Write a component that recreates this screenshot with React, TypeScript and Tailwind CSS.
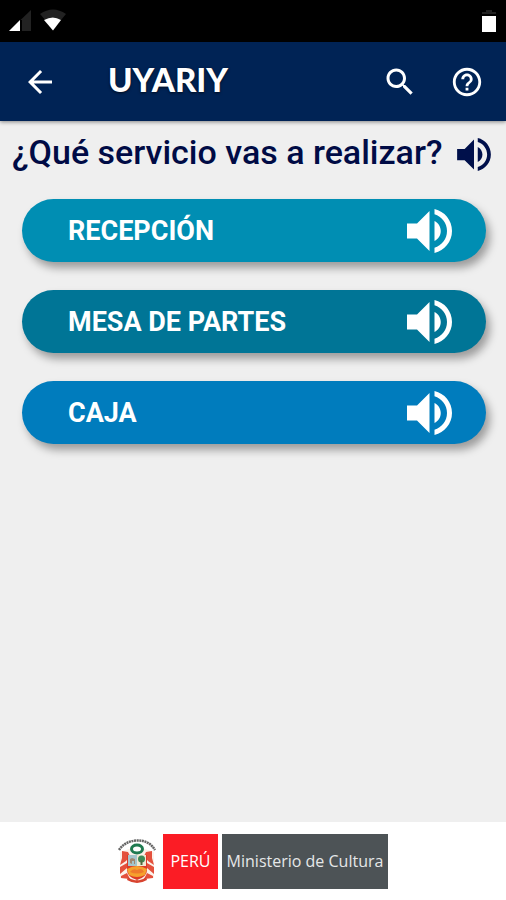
import React from "react";

const services = [
  { name: "RECEPCIÓN", color: "bg-[#008eb3]" },
  { name: "MESA DE PARTES", color: "bg-[#007596]" },
  { name: "CAJA", color: "bg-[#007cbd]" },
];

function Speaker({ className }: { className: string }) {
  return (
    <svg viewBox="3 3.2 18 17.6" fill="currentColor" className={className} aria-hidden="true">
      <path d="M3 9v6h4l5 5V4L7 9H3zM16.5 12c0-1.77-1.02-3.29-2.5-4.03v8.05c1.48-.73 2.5-2.25 2.5-4.02zM14 3.23v2.06c2.89.86 5 3.54 5 6.71s-2.11 5.85-5 6.71v2.06c4.01-.91 7-4.49 7-8.77s-2.99-7.86-7-8.77z" />
    </svg>
  );
}

function StatusBar() {
  return (
    <div className="flex h-[42px] items-start justify-between bg-black px-[9px] pt-[9px]">
      <div className="flex gap-2">
        <svg viewBox="0 0 23 23" className="h-[23px] w-[23px]" aria-hidden="true">
          <path d="M22 1V22H0Z" fill="#222" />
          <path d="M11 11V22H0Z" fill="#fff" />
          <path d="M11 11h2v11h-2z" fill="#000" />
        </svg>
        <svg viewBox="0 0 26 23" className="h-[23px] w-[26px]" aria-hidden="true">
          <path d="M0 5Q13 -4 26 5L13 21Z" fill="#222" />
          <path d="M0 5L4 11Q13 6 21 11L26 5L13 21Z" fill="#000" />
          <path d="M4 11Q13 6 21 11L13 21.500Z" fill="#fff" />
        </svg>
      </div>
      <svg viewBox="0 0 16 24" className="h-6 w-4" aria-hidden="true">
        <path d="M5 1h6v2h4v2H1V3h4z" fill="#222" />
        <path d="M1 7h14v16H1z" fill="#fff" />
      </svg>
    </div>
  );
}

function Header() {
  return (
    <header className="z-10 flex h-[79px] items-center bg-[#002355] px-[22px] text-white shadow-[0_1px_4px_rgba(0,0,0,0.45)]">
      <button type="button" aria-label="Volver">
        <svg viewBox="0 0 24 24" fill="currentColor" className="h-9 w-9" aria-hidden="true">
          <path d="M20 11H7.83l5.59-5.59L12 4l-8 8 8 8 1.41-1.41L7.83 13H20v-2z" />
        </svg>
      </button>
      <h1 className="ml-[50px] flex-1 pb-[6px] font-['Lato',sans-serif] text-[33px] leading-10 font-black [text-shadow:0_1px_3px_rgba(0,0,0,0.7)]">
        UYARIY
      </h1>
      <div className="flex items-center gap-8">
        <button type="button" aria-label="Buscar">
          <svg viewBox="0 0 24 24" fill="currentColor" className="h-9 w-9" aria-hidden="true">
            <path d="M15.5 14h-.79l-.28-.27C15.41 12.59 16 11.11 16 9.5 16 5.91 13.09 3 9.5 3S3 5.91 3 9.5 5.91 16 9.5 16c1.61 0 3.09-.59 4.23-1.57l.27.28v.79l5 4.99L20.49 19l-4.99-5zm-6 0C7.01 14 5 11.99 5 9.5S7.01 5 9.5 5 14 7.01 14 9.5 11.99 14 9.5 14z" />
          </svg>
        </button>
        <button type="button" aria-label="Ayuda">
          <svg viewBox="0 0 24 24" fill="currentColor" className="h-[34px] w-[34px]" aria-hidden="true">
            <path d="M11 18h2v-2h-2v2zm1-16C6.48 2 2 6.48 2 12s4.48 10 10 10 10-4.48 10-10S17.52 2 12 2zm0 18c-4.41 0-8-3.59-8-8s3.59-8 8-8 8 3.59 8 8-3.59 8-8 8zm0-14c-2.21 0-4 1.79-4 4h2c0-1.1.9-2 2-2s2 .9 2 2c0 2-3 1.75-3 5h2c0-2.25 3-2.5 3-5 0-2.21-1.79-4-4-4z" />
          </svg>
        </button>
      </div>
    </header>
  );
}

function Crest() {
  return (
    <svg viewBox="0 0 38 46" className="h-[46px] w-[38px]" role="img" aria-label="Escudo del Perú">
      <path d="M1 12Q7 3 19 2.500T37 12" fill="none" stroke="#666" strokeWidth="2.500" strokeDasharray="2 .6" />
      <path d="M2 14l9-3 16 0 9 3v26l-8 1-9 4-9-4-8-1Z" fill="#fbf1ea" />
      <path d="M4 13l6 1 2 4-4 5-6 4 2-7zM34 13l-6 1-2 4 4 5 6 4-2-7z" fill="#e4503c" />
      <path d="M2 29l7-4v5l-7 6zM36 29l-7-4v5l7 6zM3 38l6-3 3 6-9-1zM35 38l-6-3-3 6 9-1z" fill="#e4503c" />
      <path d="M9 17h20v15q0 7-10 10Q9 39 9 32Z" fill="#dc3b28" />
      <path d="M10 17h9v11h-9z" fill="#a5c5cc" />
      <path d="M19 17h9v11h-9z" fill="#efe8d2" />
      <path d="M12 25v-4l2-1 3 1v5h-1v-3h-2v3z" fill="#a08770" />
      <circle cx="23.500" cy="21" r="3.500" fill="#3d8b58" />
      <path d="M22.500 22h2v5h-2z" fill="#526b3e" />
      <path d="M9 31q10-6 20 0l-2 6q-8 4-16 0z" fill="#f6a12d" />
      <path d="M12 34q3-4 7-2 5-3 7 2-7 3-14 0z" fill="#ef7a2c" />
      <ellipse cx="19" cy="11" rx="5.500" ry="4" fill="#fff" stroke="#1f7a50" strokeWidth="3" />
      <path d="M10 39q4 4 9 3 5 1 9-3l1 3q-5 3-10 3t-10-3z" fill="#d8432f" />
    </svg>
  );
}

export default function App() {
  return (
    <div className="flex min-h-screen flex-col bg-[#efefef] font-['Roboto',sans-serif]">
      <StatusBar />
      <Header />
      <main className="flex-1 pt-2">
        <div className="flex h-[50px] items-center justify-between pr-[15px] pl-3">
          <h2 className="pb-1 text-[34px] leading-10 font-medium whitespace-nowrap text-[#000b45]">
            ¿Qué servicio vas a realizar?
          </h2>
          <button type="button" aria-label="Escuchar la pregunta" className="text-[#00104b]">
            <Speaker className="h-[33px] w-[34px]" />
          </button>
        </div>
        <div className="mt-5 flex flex-col gap-7 pr-5 pl-[22px]">
          {services.map(({ name, color }) => (
            <button
              key={name}
              type="button"
              className={`flex h-[63px] w-full items-center justify-between rounded-full pr-[34px] pl-[46px] text-white shadow-[4px_6px_9px_rgba(0,0,0,0.35)] ${color}`}
            >
              <span className="text-[27px] leading-8 font-bold">{name}</span>
              <Speaker className="h-11 w-[45px]" />
            </button>
          ))}
        </div>
      </main>
      <footer className="flex h-[78px] items-center justify-center bg-white font-['Open_Sans',sans-serif] text-base">
        <Crest />
        <div className="ml-[7px] flex h-[55px] w-[55px] items-center justify-center bg-[#fb1c25] text-white">
          PERÚ
        </div>
        <div className="ml-1 flex h-[55px] w-[166px] items-center justify-center bg-[#4d5356] whitespace-nowrap text-[#e5e7e8]">
          Ministerio de Cultura
        </div>
      </footer>
    </div>
  );
}
